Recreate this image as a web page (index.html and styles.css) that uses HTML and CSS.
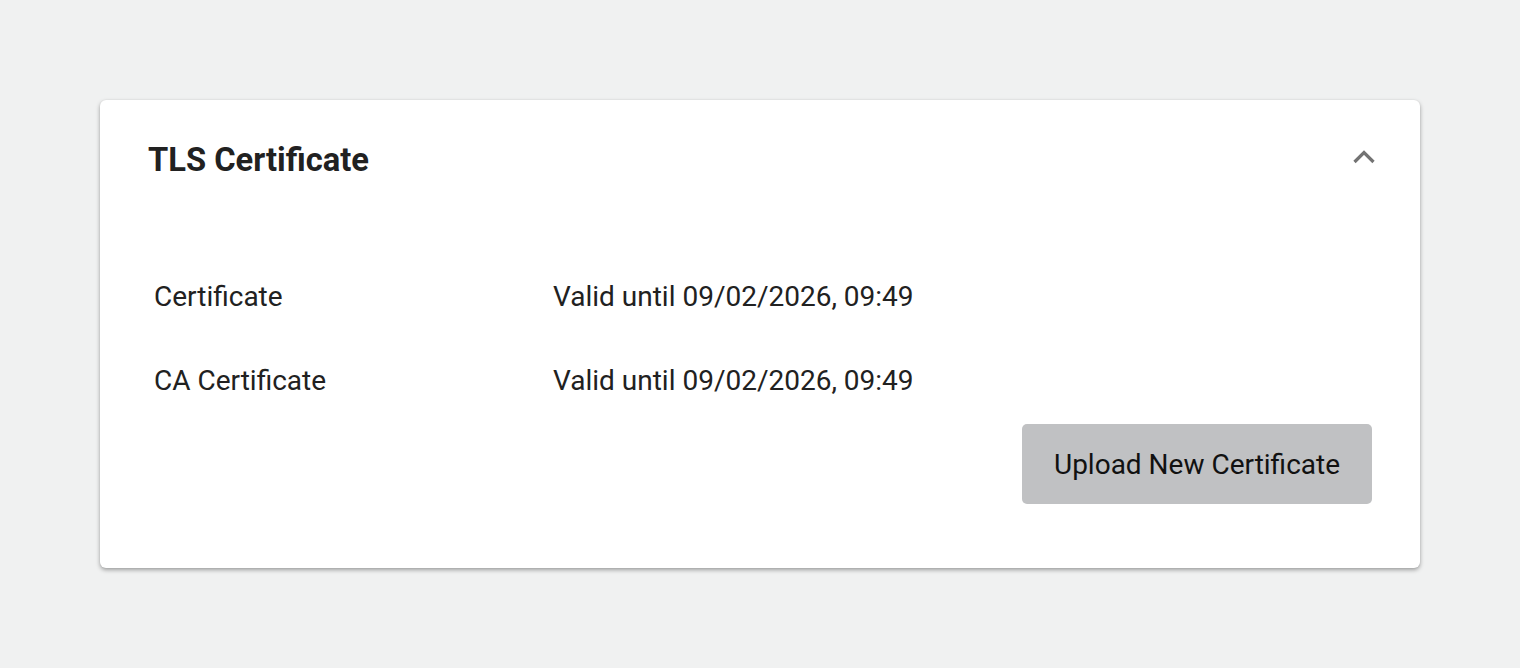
FILE: index.html
```html
<!DOCTYPE html>
<html>
<head>
<meta charset="utf-8">
<link rel="stylesheet" href="styles.css">
</head>
<body>
<div class="page">
  <section class="card">
    <header class="card-header">
      <h2 class="card-title">TLS Certificate</h2>
      <button class="collapse-btn" aria-label="Collapse">
        <svg width="24" height="14" viewBox="0 0 24 14"><polyline points="2.5,12 12,2.5 21.5,12" fill="none" stroke="#737373" stroke-width="3.2" stroke-linecap="butt" stroke-linejoin="miter"/></svg>
      </button>
    </header>
    <div class="rows">
      <div class="row"><div class="label">Certificate</div><div class="value">Valid until 09/02/2026, 09:49</div></div>
      <div class="row"><div class="label">CA Certificate</div><div class="value">Valid until 09/02/2026, 09:49</div></div>
    </div>
    <div class="actions">
      <button class="upload-btn">Upload New Certificate</button>
    </div>
  </section>
</div>
</body>
</html>
```

FILE: styles.css
```css
html, body {
  margin: 0;
  padding: 0;
  background: #f0f1f1;
  font-family: Roboto, "Liberation Sans", sans-serif;
  color: #212121;
}
.page {
  padding: 100px 100px;
}
.card {
  background: #ffffff;
  border-radius: 6px;
  box-shadow: 0 2px 4px rgba(0, 0, 0, 0.35), 0 0 2px rgba(0, 0, 0, 0.06);
  padding: 36px 48px 64px 48px;
}
.card-header {
  display: flex;
  align-items: center;
  justify-content: space-between;
  height: 48px;
}
.card-title {
  margin: 0;
  font-size: 32.7px;
  font-weight: 700;
  line-height: 48px;
  color: #212121;
}
.collapse-btn {
  border: 0;
  background: transparent;
  padding: 0;
  margin-right: -4px;
  margin-top: -6px;
  display: flex;
  cursor: pointer;
}
.rows {
  margin-top: 70px;
  padding-left: 6px;
}
.row {
  display: flex;
  align-items: center;
  height: 84px;
  font-size: 28px;
  color: #212121;
}
.label {
  width: 399px;
}
.actions {
  display: flex;
  justify-content: flex-end;
  margin-top: 2px;
}
.upload-btn {
  height: 80px;
  min-width: 350px;
  border: 0;
  border-radius: 5px;
  background: #c0c1c3;
  color: #111111;
  font-family: Roboto, "Liberation Sans", sans-serif;
  font-size: 28px;
  white-space: nowrap;
  padding: 0 30px;
  cursor: pointer;
}
```
